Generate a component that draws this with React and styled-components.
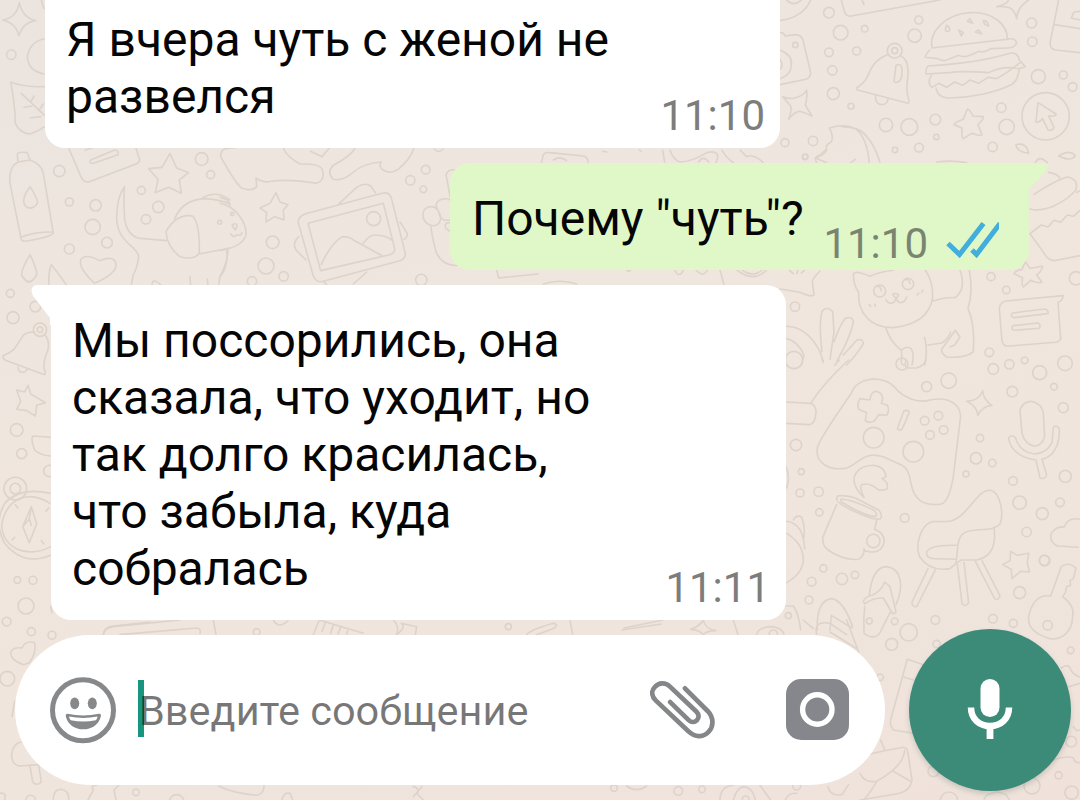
import React from "react";
import styled, { createGlobalStyle } from "styled-components";

const GlobalStyle = createGlobalStyle`
  * {
    box-sizing: border-box;
  }

  body {
    margin: 0;
    overflow: hidden;
    font-family: Roboto, "Noto Sans", sans-serif;
  }
`;

// every tile is drawn on a grid three times finer than the screen
const tiles = [
  {
    x: 780,
    y: 0,
    dots: [
      [147, 38, 16], [182, 98, 22], [254, 86, 10], [147, 157, 13], [230, 153, 12], [157, 211, 14],
      [160, 281, 18], [213, 319, 9], [416, 60, 12], [404, 107, 20], [344, 152, 22], [344, 152, 9],
      [46, 135, 8], [755, 69, 15], [757, 125, 14], [775, 230, 21], [850, 225, 12], [878, 261, 13],
      [664, 323, 14], [680, 381, 23], [797, 349, 71], [466, 359, 16], [388, 381, 25], [318, 375, 20],
      [469, 411, 8], [417, 443, 13], [345, 450, 8], [99, 423, 14], [15, 428, 12], [75, 471, 8], [638, 441, 14],
    ],
    paths: [
      "M0 62 Q70 52 92 0 M20 0 Q40 22 64 0",
      "M184 0 L193 34 Q197 50 214 48 L480 0 M246 0 L252 14",
      "M0 98 Q10 96 16 108 L46 104 Q66 104 70 124 L92 218 Q92 232 78 238 L0 254 M0 150 Q38 165 34 195 Q34 225 0 236 M0 178 Q12 196 0 208",
      "M322 164 C270 184 270 225 254 243 Q246 254 230 264 Q228 270 236 271 L384 310 Q390 308 386 298 C370 250 394 228 380 188 Q372 170 362 168 M286 287 Q286 314 308 314 Q324 310 324 296",
      "M348 196 Q362 188 366 204 Q368 230 360 242 Q350 252 342 244 Z",
      "M456 144 C446 96 496 42 570 38 C640 34 684 76 682 118 L456 144 M682 118 Q704 112 710 128 Q706 144 682 144 L632 146 Q612 160 598 154 L570 166 Q550 174 536 166 L510 176 Q490 188 474 176 L436 172 Q434 166 450 150",
      "M444 198 Q590 190 690 160 Q712 154 718 180 L736 200 L716 206 Q670 196 626 218 Q540 212 510 218 L438 222 Q436 206 444 198 M454 226 Q440 250 456 262 L476 250 L500 262 L524 246 L548 256 L570 240 L596 250 L624 232 L650 236 L680 218 L720 188 M468 264 Q474 296 510 294 C580 292 650 276 690 256 Q712 248 718 208",
      "M500 76 Q512 82 508 92 Q500 98 496 90 Z M536 90 L550 98 L544 108 Z M562 64 L570 56 L578 70 Z M610 62 Q622 60 626 78 Q612 76 610 62 Z M586 96 L596 90 L606 102 Z",
      "M650 20 Q680 14 686 0 M650 20 Q686 18 696 28 Q708 40 710 56 Q712 20 746 0",
      "M836 0 L812 120 Q806 146 826 150 L900 158 M824 74 L900 86 M874 54 L882 36 L900 34 M874 54 L900 60",
      "M8 290 Q36 300 50 292 Q72 286 80 270 Q82 300 76 314 Q84 330 96 348 Q70 336 56 334 Q34 344 26 358 Q36 330 32 318 Q22 306 8 290 Z",
      "M106 474 L140 488 M106 474 Q134 464 140 450 Q134 434 154 426 Q162 410 148 384 Q200 368 232 390 Q262 420 268 488 M186 380 Q240 380 262 412 Q286 440 300 488 M212 488 L226 478",
      "M562 327 Q572 330 578 348 L610 350 Q612 356 594 374 L606 404 Q600 410 576 400 L550 416 Q544 412 546 384 L522 374 Q522 368 550 358 Z",
      "M774 308 L828 342 Q830 350 806 348 L822 382 Q818 394 804 390 L788 356 Q774 370 768 366 Z",
      "M708 434 Q740 426 746 460 Q708 454 708 434 Z M836 468 Q870 446 886 468 Q870 486 836 468 Z M766 488 Q778 464 802 488 M470 486 Q520 480 560 488",
    ],
  },
  {
    x: 780,
    y: 165,
    dots: [
      [45, 425, 14], [299, 378, 18], [384, 357, 17], [633, 335, 12], [679, 375, 11], [888, 340, 20],
      [628, 562, 13], [855, 595, 22], [688, 598, 14], [734, 586, 10],
    ],
    paths: [
      "M806 22 Q836 26 842 44 M762 88 Q820 50 860 36 Q896 40 888 74 Q870 100 820 124 Q780 140 750 132 M890 82 L900 78 M750 206 L784 180 L804 186 L822 166 L842 172 L862 150 L880 154 L900 136 M750 206 Q776 240 800 276 Q814 290 830 286 L900 272",
      "M28 316 L40 326 M50 326 L54 316 M64 324 L74 316 M120 318 Q92 344 98 358 L102 390 Q92 398 60 382 L0 372",
      "M270 334 Q226 314 220 328 Q220 360 236 382 C232 440 270 490 340 488 C410 480 450 450 458 398 Q460 350 436 316 M270 334 Q300 320 340 316 M318 404 Q326 420 342 412 L348 402 L356 412 Q374 416 380 396 M338 388 Q350 382 356 390 L348 402 Z M268 418 L272 424 M284 418 L286 424 M412 390 L416 384 M426 382 L428 376",
      "M290 364 Q302 360 304 378 M376 344 Q388 340 390 356",
      "M458 408 Q500 396 526 398 Q560 370 540 316 M568 316 Q580 380 564 430 Q586 480 580 560 Q560 580 500 576 Q476 560 490 546 L526 496 L540 516 L524 540 M318 490 Q330 530 364 556 L366 578 Q360 600 372 600 M434 518 Q444 560 434 600 M444 540 L486 534 Q506 520 512 502 M364 556 Q380 540 394 552 Q404 566 396 600 M524 540 L510 546",
      "M736 290 Q742 300 750 310 L788 304 Q784 320 770 330 L786 352 Q770 356 752 346 L730 366 Q724 360 728 338 L702 326 Q706 316 726 314 Z",
      "M678 408 L850 392 Q846 410 834 412 L842 520 Q840 530 826 532 L680 544 Q668 540 666 526 L658 430 Q660 412 678 408 Z M698 444 L794 432 Q806 434 804 446 L702 458 Q688 454 698 444 Z M700 482 L774 474 Q784 480 778 490 L702 496 Q690 490 700 482 Z",
      "M18 484 Q80 484 120 560 L130 590 M18 520 Q56 530 72 572 L64 600 M126 560 Q116 470 126 440 Q140 420 158 440 L162 500 L150 584 M162 530 Q180 480 196 460 Q216 452 220 470 Q214 510 170 590 M190 570 L230 526 Q248 518 250 536 Q230 570 200 600",
    ],
  },
  {
    x: 780,
    y: 360,
    dots: [
      [42, 0, 26], [440, 80, 15], [506, 62, 23], [640, 27, 16], [779, 38, 21], [822, 80, 10],
      [697, 95, 16], [850, 143, 15], [366, 12, 18], [281, 233, 31], [400, 275, 31], [434, 182, 13],
      [475, 167, 13], [450, 225, 13], [491, 210, 13], [600, 234, 11], [588, 295, 17], [637, 309, 11],
      [558, 342, 9], [699, 363, 13], [856, 349, 18], [719, 428, 20], [787, 461, 18], [840, 427, 13],
      [740, 516, 14], [793, 601, 15], [719, 698, 18], [48, 255, 17], [64, 335, 9], [60, 399, 12],
      [116, 395, 14], [118, 457, 11], [374, 474, 13], [130, 625, 11], [95, 665, 13], [186, 657, 17],
      [225, 645, 11], [87, 720, 12], [280, 543, 20], [25, 767, 9],
    ],
    paths: [
      "M206 0 Q130 70 92 130 M164 16 L178 0 M126 0 L130 6 M20 126 L92 130 Q108 136 108 158 Q106 192 88 194 L20 190",
      "M378 0 Q370 22 386 24 L410 24 Q434 16 438 0",
      "M214 100 C230 50 310 44 344 82 C370 116 420 130 450 120 C510 108 550 136 540 184 L520 350 Q508 424 484 432 C430 440 400 420 392 364 Q386 326 366 316 L310 290 C250 272 240 310 200 324 C150 334 104 310 112 264 Q114 244 214 100 Z",
      "M286 94 Q306 96 308 114 L304 130 L322 136 Q330 148 320 166 L296 164 L284 182 Q268 192 256 182 L260 158 L236 148 Q230 130 240 116 L270 120 Q272 98 286 94 Z",
      "M372 152 L384 152 Q390 156 386 162 L366 208 Q360 214 352 206 Z",
      "M608 92 Q610 120 636 136 Q606 138 594 166 Q590 138 560 124 Q598 122 608 92 Z",
      "M720 150 Q730 124 754 124 Q784 130 790 158 L794 230 Q786 256 764 258 Q736 256 726 220 Z M686 234 Q692 222 706 232 C716 266 740 280 764 282 Q800 280 816 248 L820 202 Q830 194 838 206 C840 250 824 290 786 298 L800 344 Q796 360 780 354 L768 300 C724 296 690 270 686 234 Z",
      "M252 412 Q236 380 246 374 Q268 366 296 390 Q314 392 322 386 Q326 366 306 356 L318 350 Q316 320 280 316 C230 318 210 350 230 386 Q238 400 252 412 Z",
      "M172 408 Q190 404 226 414 L296 450 Q308 462 302 476 Q290 482 246 464 Q170 432 170 418 Z M182 418 Q210 416 280 450 Q296 462 286 470 Q250 466 184 426 Z M170 434 L128 532 Q128 560 144 570 Q190 602 236 598 Q254 586 252 566 M290 480 L284 508 Q316 520 312 548 Q306 578 272 576 L252 572",
      "M462 484 C420 490 404 560 420 592 Q450 636 510 626 L528 610 L544 600 L590 600 C630 592 650 560 642 502 M462 484 C510 486 520 486 546 464 C590 420 600 392 630 390 C666 398 670 470 660 492 C640 516 580 504 554 518 C530 530 534 570 528 610 M530 556 Q450 554 440 576 Q438 594 460 596 L528 598",
      "M444 626 L396 726 Q396 742 410 740 L466 630 M532 612 L546 730 Q556 744 566 728 L552 608 M586 604 L644 716 Q656 722 660 708 L606 602",
      "M894 562 L832 558 Q806 544 814 520 Q832 496 852 502 Q864 470 900 478",
      "M692 574 L712 586 L746 580 L742 608 L748 636 L722 634 L696 656 L694 628 L668 614 L690 602 Z",
      "M20 520 Q70 550 70 600 Q68 640 20 668 M20 484 Q70 490 74 566 M40 480 Q48 464 64 470 Q78 500 70 540 M18 320 Q32 350 20 384 M18 738 L40 738 Q56 760 62 810",
      "M112 810 Q108 720 156 716 Q190 722 218 800 M150 810 L154 766 L216 804",
    ],
  },
  {
    x: 860,
    y: 560,
    dots: [
      [554, 2, 16], [399, 176, 13], [460, 190, 12], [563, 196, 14], [226, 180, 13],
      [146, 217, 26], [95, 253, 18], [230, 252, 11], [632, 271, 10], [634, 545, 16], [596, 646, 11],
      [635, 698, 20], [516, 678, 24], [220, 634, 16], [60, 352, 10], [267, 722, 26],
    ],
    paths: [
      "M28 104 Q38 20 80 20 C126 26 132 80 108 134 M10 124 Q12 112 40 104 Q66 90 74 66 L90 80 L108 156 L98 162 L70 114 Q40 112 14 132 Z M14 140 Q10 180 12 220 Q40 240 58 222 L90 158",
      "M572 108 L604 20 Q624 4 648 24 L640 56 L630 62 L632 76 L620 80 L616 98 L608 110 Q646 140 638 168 C638 220 600 240 570 236 Q500 216 506 170 C516 120 540 104 572 108 Z",
      "M160 520 L100 510 Q86 490 94 472 L142 298 L190 314 M128 350 L160 360",
      "M0 590 Q60 574 130 562 Q142 562 144 580 L156 660 Q152 690 120 700 L0 720 M62 540 L74 570 M134 570 Q130 620 50 664 Q14 670 0 640 M96 632 L152 664 M50 664 Q30 700 14 716",
      "M604 324 Q624 310 630 324 Q634 340 660 352 M626 380 L660 370 M640 500 L650 512 L660 510 M580 600 Q620 586 640 594 Q644 610 660 608 M372 720 Q374 704 398 700 Q410 690 440 706 L448 720",
    ],
  },
  {
    x: 0,
    y: 140,
    dots: [
      [178, 93, 17], [208, 186, 12], [287, 196, 17], [278, 261, 23], [208, 327, 15], [321, 308, 16],
      [424, 151, 12], [475, 201, 17], [438, 238, 14], [605, 57, 19], [632, 104, 12], [659, 247, 6],
    ],
    paths: [
      "M52 42 Q56 34 82 38 L90 60 Q124 72 130 100 L160 280 Q150 292 76 304 Q62 304 62 290 L30 130 Q26 80 54 66 Z M54 66 L90 60 M62 292 Q100 276 154 276 M90 140 Q116 180 112 190 Q98 212 78 200 Q60 180 90 140 Z",
      "M90 344 Q112 390 110 404 Q90 444 66 408 Q60 394 90 344 Z M146 436 Q146 390 154 374 Q176 400 200 436",
      "M206 24 L242 108 Q250 128 266 126 L408 72 Q424 66 416 50 L408 24 M256 30 L276 24 M272 60 L344 30 Q358 30 354 44 L280 70 Q266 72 272 60 Z",
      "M510 40 L530 84 L566 98 L538 120 L544 160 L506 142 L466 158 L474 118 L446 86 L486 82 Z",
      "M284 430 Q236 386 242 360 Q256 338 298 362 Q346 344 348 374 Q350 400 284 430 Z",
      "M374 140 Q350 170 350 240 C356 310 414 320 416 350 Q412 384 400 404 L394 436 M374 140 Q370 150 374 240 Q386 296 430 296 L500 302 M524 236 Q550 176 620 176 Q660 180 690 192 M610 172 Q650 150 690 180 M598 342 L690 324 M498 274 Q530 220 578 228 Q600 250 598 340 Q580 362 540 350 Q500 320 498 274 Z M684 330 Q682 370 660 410 L656 436 M570 410 L572 436 M622 418 L624 436 M456 436 Q456 410 484 436",
    ],
  },
  {
    x: 220,
    y: 140,
    dots: [
      [158, 307, 19], [138, 378, 24], [191, 409, 14], [96, 424, 14], [37, 222, 5], [617, 89, 13],
      [571, 121, 14], [610, 148, 10], [656, 20, 14], [461, 236, 21], [604, 420, 17],
    ],
    paths: [
      "M44 24 Q0 20 2 50 Q40 120 64 144 Q96 156 110 140 L108 114 M108 114 Q130 130 154 124 Q210 116 290 130 Q318 120 306 86 Q296 70 240 72 Q200 50 190 24 M272 34 L306 50 L328 24 M406 24 Q390 50 340 76 Q318 96 340 118 Q370 124 400 96 Q430 70 484 66 M484 66 Q474 80 490 90 Q510 104 534 88 Q570 60 582 24",
      "M168 158 L180 186 L204 194 L190 210 L192 240 L164 230 L138 246 L140 218 L120 204 L150 190 Z",
      "M0 172 Q30 180 30 196 M0 190 C50 200 80 250 78 284 Q70 320 0 332 M20 330 Q26 380 0 410 M36 256 Q46 246 52 258 L46 270 Z M32 282 Q42 296 50 284 Q62 290 66 278",
      "M254 222 L486 160 Q508 154 514 174 L556 340 Q556 358 540 362 L310 424 Q290 430 280 408 L236 252 Q230 234 254 222 Z M264 250 L490 190 L524 326 Q526 338 510 344 L302 392 Z M304 374 Q330 314 366 290 Q390 290 400 300 L484 346 M430 310 Q450 280 474 286 Q500 288 518 302",
      "M356 192 L410 142 Q436 126 452 138 L466 158 M236 290 Q216 310 228 330 L258 360 M540 246 L562 280 Q562 294 552 298 M310 424 L320 434 M400 432 L440 396",
      "M712 90 Q684 86 678 104 L692 178 M692 248 Q670 246 678 266 L694 276 M632 258 Q640 310 650 340 Q670 380 716 376 M632 200 C600 200 602 248 632 256 C656 262 670 240 656 214 Q648 200 632 200 M652 206 C636 180 680 170 690 180 M656 214 Q660 246 690 240",
    ],
  },
  {
    x: 0,
    y: 280,
    dots: [
      [31, 40, 12], [39, 113, 18], [106, 80, 16], [120, 149, 20], [120, 149, 8], [50, 450, 19], [65, 521, 15],
      [148, 573, 17], [46, 626, 34], [46, 626, 16], [52, 900, 10], [99, 901, 12], [78, 978, 24],
      [20, 1025, 13], [94, 1055, 12], [156, 1066, 12],
    ],
    paths: [
      "M104 156 Q72 156 66 172 L42 208 Q28 220 8 228 Q8 238 20 242 L134 284 Q138 276 132 266 Q130 240 144 210 Q150 180 134 164 M54 262 Q56 280 74 276 L84 266",
      "M84 316 L92 342 L136 368 L110 376 L106 408 L80 392 L50 388 L62 364 L50 330 L74 336 Z",
      "M152 472 L98 468 Q92 480 104 510 Q120 526 152 528 M152 980 L156 998",
      "M150 640 Q60 620 14 670 Q-20 730 14 790 Q70 860 152 826 M150 670 C80 626 20 660 6 730 C0 800 80 840 152 800 M94 680 L110 732 L88 788 L68 740 Z M68 740 L88 716 L94 680 M88 716 L94 736 M46 674 L54 684 M146 684 L138 694 M36 780 L44 772 M132 792 L124 782",
      "M76 0 Q86 12 98 0 M310 1064 Q312 1040 340 1038 L450 1026",
    ],
  },
  {
    x: 440,
    y: 150,
    dots: [[1096, 20, 8]],
    paths: [
      "M304 40 L310 14 Q316 6 330 8 L430 18 Q446 22 444 40 M340 30 Q360 16 380 32 M488 4 L500 6 M598 0 L604 4",
      "M668 0 L674 36 M690 0 Q700 30 720 36 Q760 34 800 8 Q830 0 834 20 L828 38 M776 36 Q790 14 806 36 M846 0 Q856 20 880 38 M900 0 L920 20 Q940 10 970 38 M1130 38 Q1120 20 1140 16 L1156 0",
      "M170 360 L176 384 L294 372 M310 402 Q360 386 410 402 M560 360 Q566 368 572 360 M704 360 Q716 386 730 362 M768 360 Q790 384 802 360 M840 360 L852 404 M890 360 Q940 400 980 360 M906 360 Q940 384 966 360",
    ],
  },
  {
    x: 0,
    y: 0,
    dots: [[34, 164, 14]],
    paths: [
      "M58 8 Q68 54 108 62 Q70 66 56 108 Q50 70 8 60 Q50 54 58 8 Z M134 116 Q90 124 82 170 Q84 214 134 222 M124 0 L132 26",
      "M32 246 Q70 262 134 260 M32 246 Q46 320 46 370 Q60 400 90 402 Q116 394 134 380 M64 280 L134 346 M92 306 L102 288 M72 322 L96 318 M116 332 L130 312 M90 354 L122 350",
    ],
  },
  {
    x: 0,
    y: 620,
    dots: [
      [22, 176, 22], [408, 517, 10], [92, 540, 14], [530, 546, 22], [770, 36, 10],
    ],
    paths: [
      "M70 134 Q30 120 32 96 Q40 80 66 84 Q76 60 104 68 Q110 100 88 128 Z M44 244 L36 290",
      "M64 366 C30 370 24 430 56 438 L116 434 M90 438 L98 486 Q110 500 124 486 L116 434",
      "M0 520 Q20 516 14 540 M160 540 Q160 508 184 508 Q208 512 206 540 M264 540 L280 510 Q270 496 290 496 M356 496 L342 510 L348 540 M656 498 Q700 520 770 526 Q794 520 792 496 M846 540 Q850 516 870 520 L878 540",
      "M310 44 Q312 24 340 20 L540 0 M360 44 L590 24 Q604 26 600 40 M640 0 L648 44 M820 0 Q836 30 866 0",
      "M940 44 L958 0 L1090 40 M976 8 L966 34 M1000 16 L992 40 M1022 22 L1014 42 M1044 26 L1040 44 M1180 0 Q1200 20 1190 44",
    ],
  },
  {
    x: 600,
    y: 620,
    dots: [
      [884, 4, 10], [808, 3, 9], [520, 42, 12], [42, 504, 10], [235, 513, 13],
      [306, 508, 10], [437, 538, 10], [590, 498, 12],
    ],
    paths: [
      "M72 24 L190 0 M66 30 L184 12 M310 0 Q314 26 348 32 Q320 32 310 44 Q300 30 272 28 Q300 18 310 0 M400 0 L414 44 M470 44 Q474 20 520 20 Q550 26 552 44 M610 0 L640 26 M650 44 Q640 0 690 10 L740 44 M690 36 Q730 60 770 86 M740 0 L776 96",
      "M360 540 Q360 500 400 496 M400 540 Q412 500 434 500 Q460 506 466 540 M480 496 L512 540 M556 540 Q564 518 590 520 M684 500 Q690 530 726 524 L746 494",
    ],
  },
  {
    x: 340,
    y: 610,
    dots: [[505, 50, 9]],
    paths: [
      "M170 74 Q200 50 184 40 L230 50 L226 74 M560 74 Q570 60 640 40 Q656 42 644 54 L590 74 M690 30 L698 74",
      "M220 530 Q240 534 232 552 L250 570 M246 530 L220 560 M860 528 Q890 550 920 528",
    ],
  },
];

const Doodles = () => (
  <Wallpaper viewBox="0 0 1080 800">
    {tiles.map((tile, i) => (
      <g key={i} transform={`translate(${tile.x} ${tile.y}) scale(0.3333)`}>
        {tile.dots.map(([cx, cy, r], j) => (
          <circle key={j} cx={cx} cy={cy} r={r} />
        ))}
        {tile.paths.map((d, j) => (
          <path key={j} d={d} />
        ))}
      </g>
    ))}
  </Wallpaper>
);

const SmileIcon = () => (
  <svg width="68" height="68" viewBox="0 0 68 68">
    <circle cx="34" cy="34.3" r="30.5" fill="none" stroke="#86888a" strokeWidth="5" />
    <ellipse cx="25.7" cy="27.300" rx="4.5" ry="5.900" fill="#86888a" />
    <ellipse cx="43.3" cy="27.300" rx="4.5" ry="5.900" fill="#86888a" />
    <path d="M18.4 37.8 Q34.2 41 50 37.8 Q52.4 37.4 51.8 40.4 C49.6 49 42.4 53.3 34.3 53.3 C26.2 53.3 19 49 16.8 40.4 Q16.4 37.4 18.4 37.8 Z" fill="#86888a" />
    <path d="M20 40.600 Q34.2 43.400 48.600 40.600 Q48.200 43 46.800 44.200 Q34.2 47 21.800 44.200 Q20.400 43 20 40.600 Z" fill="#fff" />
  </svg>
);

const ClipIcon = () => (
  <svg width="65" height="60" viewBox="0 0 66 60">
    <path
      d="M35.5 8 L58.5 31 C66 39 63.5 48 60 51.5 C55 57.5 46 58.5 39.5 52 L6 20.5 C1 15.5 1.5 10 5 6.5 C9 2.2 15.5 1.7 20 6 L47 31.5 C50.5 35 49.5 38.5 47.5 40.5 C45 43 41.5 42.5 39 40 L20.5 22"
      fill="none"
      stroke="#848688"
      strokeWidth="4.8"
      strokeLinecap="round"
      strokeLinejoin="round"
    />
  </svg>
);

const CameraIcon = () => (
  <svg width="63" height="61" viewBox="0 0 63 61">
    <rect width="63" height="61" rx="15" fill="#85878c" />
    <circle cx="31.3" cy="30.5" r="14.7" fill="none" stroke="#fff" strokeWidth="5.4" />
  </svg>
);

const MicIcon = () => (
  <svg width="46" height="60" viewBox="0 0 46 60">
    <rect x="13.5" y="0" width="19" height="38" rx="9.5" fill="#fff" />
    <path d="M4 28.5 C4 40 12.5 47 23 47 S42 40 42 28.5" fill="none" stroke="#fff" strokeWidth="6.5" />
    <path d="M19.6 46 H26.4 V60 H19.6 Z" fill="#fff" />
  </svg>
);

const ReadIcon = () => (
  <Ticks viewBox="0 0 54 38">
    <path d="M3 23.5 L14.5 34.5 L38.5 3.5" />
    <path d="M27 30 L31.5 34.5 L55 3.5" />
  </Ticks>
);

function App() {
  return (
    <Screen>
      <GlobalStyle />
      <Doodles />

      <Messages>
        <Bubble $cut>
          <Text>{"Я вчера чуть с женой не\nразвелся"}</Text>
          <Meta>11:10</Meta>
        </Bubble>

        <Bubble $own>
          <Tail $own viewBox="0 0 24 34">
            <path d="M0 0 H18 Q24 1 20 8 L3 26 V34 H0 Z" />
          </Tail>
          <Text>Почему "чуть"?</Text>
          <Meta $own>
            11:10
            <ReadIcon />
          </Meta>
        </Bubble>

        <Bubble>
          <Tail viewBox="0 0 24 40">
            <path d="M24 0 H6 Q-1 2 3 11 L20 33 V40 H24 Z" />
          </Tail>
          <Text>
            {"Мы поссорились, она\nсказала, что уходит, но\nтак долго красилась,\nчто забыла, куда\nсобралась"}
          </Text>
          <Meta>11:11</Meta>
        </Bubble>
      </Messages>

      <Footer>
        <Composer>
          <SmileIcon />
          <Field>
            <Cursor />
            <Placeholder>Введите сообщение</Placeholder>
          </Field>
          <Actions>
            <ClipIcon />
            <CameraIcon />
          </Actions>
        </Composer>
        <MicButton>
          <MicIcon />
        </MicButton>
      </Footer>
    </Screen>
  );
}

export default App;

const Screen = styled.div`
  position: relative;
  display: flex;
  flex-direction: column;
  width: 1080px;
  height: 800px;
  overflow: hidden;
  background: linear-gradient(165deg, #ebe4df 0%, #efe6de 40%, #efe5dd 75%, #f0e2db 100%);
`;

/* sits behind the conversation */
const Wallpaper = styled.svg`
  position: absolute;
  inset: 0;
  width: 1080px;
  height: 800px;
  fill: none;
  stroke: #ddd3ca;
  stroke-width: 4.8;
  stroke-linejoin: round;
  stroke-linecap: round;
`;

const Messages = styled.div`
  position: relative;
  display: flex;
  flex-direction: column;
  align-items: flex-start;
  gap: 15px;
  height: 620px;
`;

const Bubble = styled.div`
  position: relative;
  display: flex;
  justify-content: space-between;
  align-items: flex-end;
  width: ${(p) => (p.$own ? "579px" : "735px")};
  height: ${(p) => (p.$cut ? "148px" : p.$own ? "107px" : "335px")};
  margin-left: ${(p) => (p.$cut ? "45px" : p.$own ? "450px" : "51px")};
  padding: ${(p) => (p.$cut ? "11px 15px 7px 21px" : p.$own ? "27px 30px 1px 22px" : "27px 16px 7px 21px")};
  border-radius: ${(p) => (p.$cut ? "0 0 20px 20px" : p.$own ? "20px 0 20px 20px" : "0 20px 20px 20px")};
  background: ${(p) => (p.$own ? "#e0f8c8" : "#fff")};
`;

const Tail = styled.svg`
  position: absolute;
  top: 0;
  ${(p) => (p.$own ? "right: -21px;" : "left: -21px;")}
  width: 24px;
  height: ${(p) => (p.$own ? "34px" : "40px")};
  fill: ${(p) => (p.$own ? "#e0f8c8" : "#fff")};
`;

const Text = styled.p`
  align-self: flex-start;
  margin: 0;
  color: #050505;
  font-size: 48px;
  line-height: 57px;
  white-space: pre;
`;

const Meta = styled.span`
  display: flex;
  align-items: center;
  color: ${(p) => (p.$own ? "#7a8471" : "#7d7d7d")};
  font-size: 42px;
  line-height: 50px;
`;

const Ticks = styled.svg`
  width: 54px;
  height: 38px;
  margin: 0 0 11px 17px;
  fill: none;
  stroke: #41aedb;
  stroke-width: 5;
`;

const Footer = styled.div`
  position: relative;
  display: flex;
  align-items: center;
  gap: 24px;
  height: 180px;
  padding-left: 15px;
`;

const Composer = styled.div`
  display: flex;
  align-items: center;
  width: 870px;
  height: 150px;
  padding: 0 36px 0 34px;
  border-radius: 75px;
  background: #fff;
`;

const Field = styled.div`
  display: flex;
  align-items: center;
  flex: 1;
  margin-left: 21px;
`;

const Cursor = styled.span`
  width: 6px;
  height: 57px;
  margin: -3px -5px 0 0;
  background: #17957f;
`;

const Placeholder = styled.span`
  padding-top: 1px;
  color: rgba(0, 0, 0, 0.54);
  font-size: 41.5px;
  line-height: 48px;
  white-space: nowrap;
`;

const Actions = styled.div`
  display: flex;
  align-items: center;
  gap: 71px;
  padding-bottom: 1px;
`;

const MicButton = styled.button`
  display: flex;
  align-items: center;
  justify-content: center;
  width: 162px;
  height: 162px;
  padding: 0 0 2px;
  border: 0;
  border-radius: 50%;
  background: #3c8a78;
  box-shadow: 0 3px 5px rgba(90, 110, 100, 0.25);
`;
